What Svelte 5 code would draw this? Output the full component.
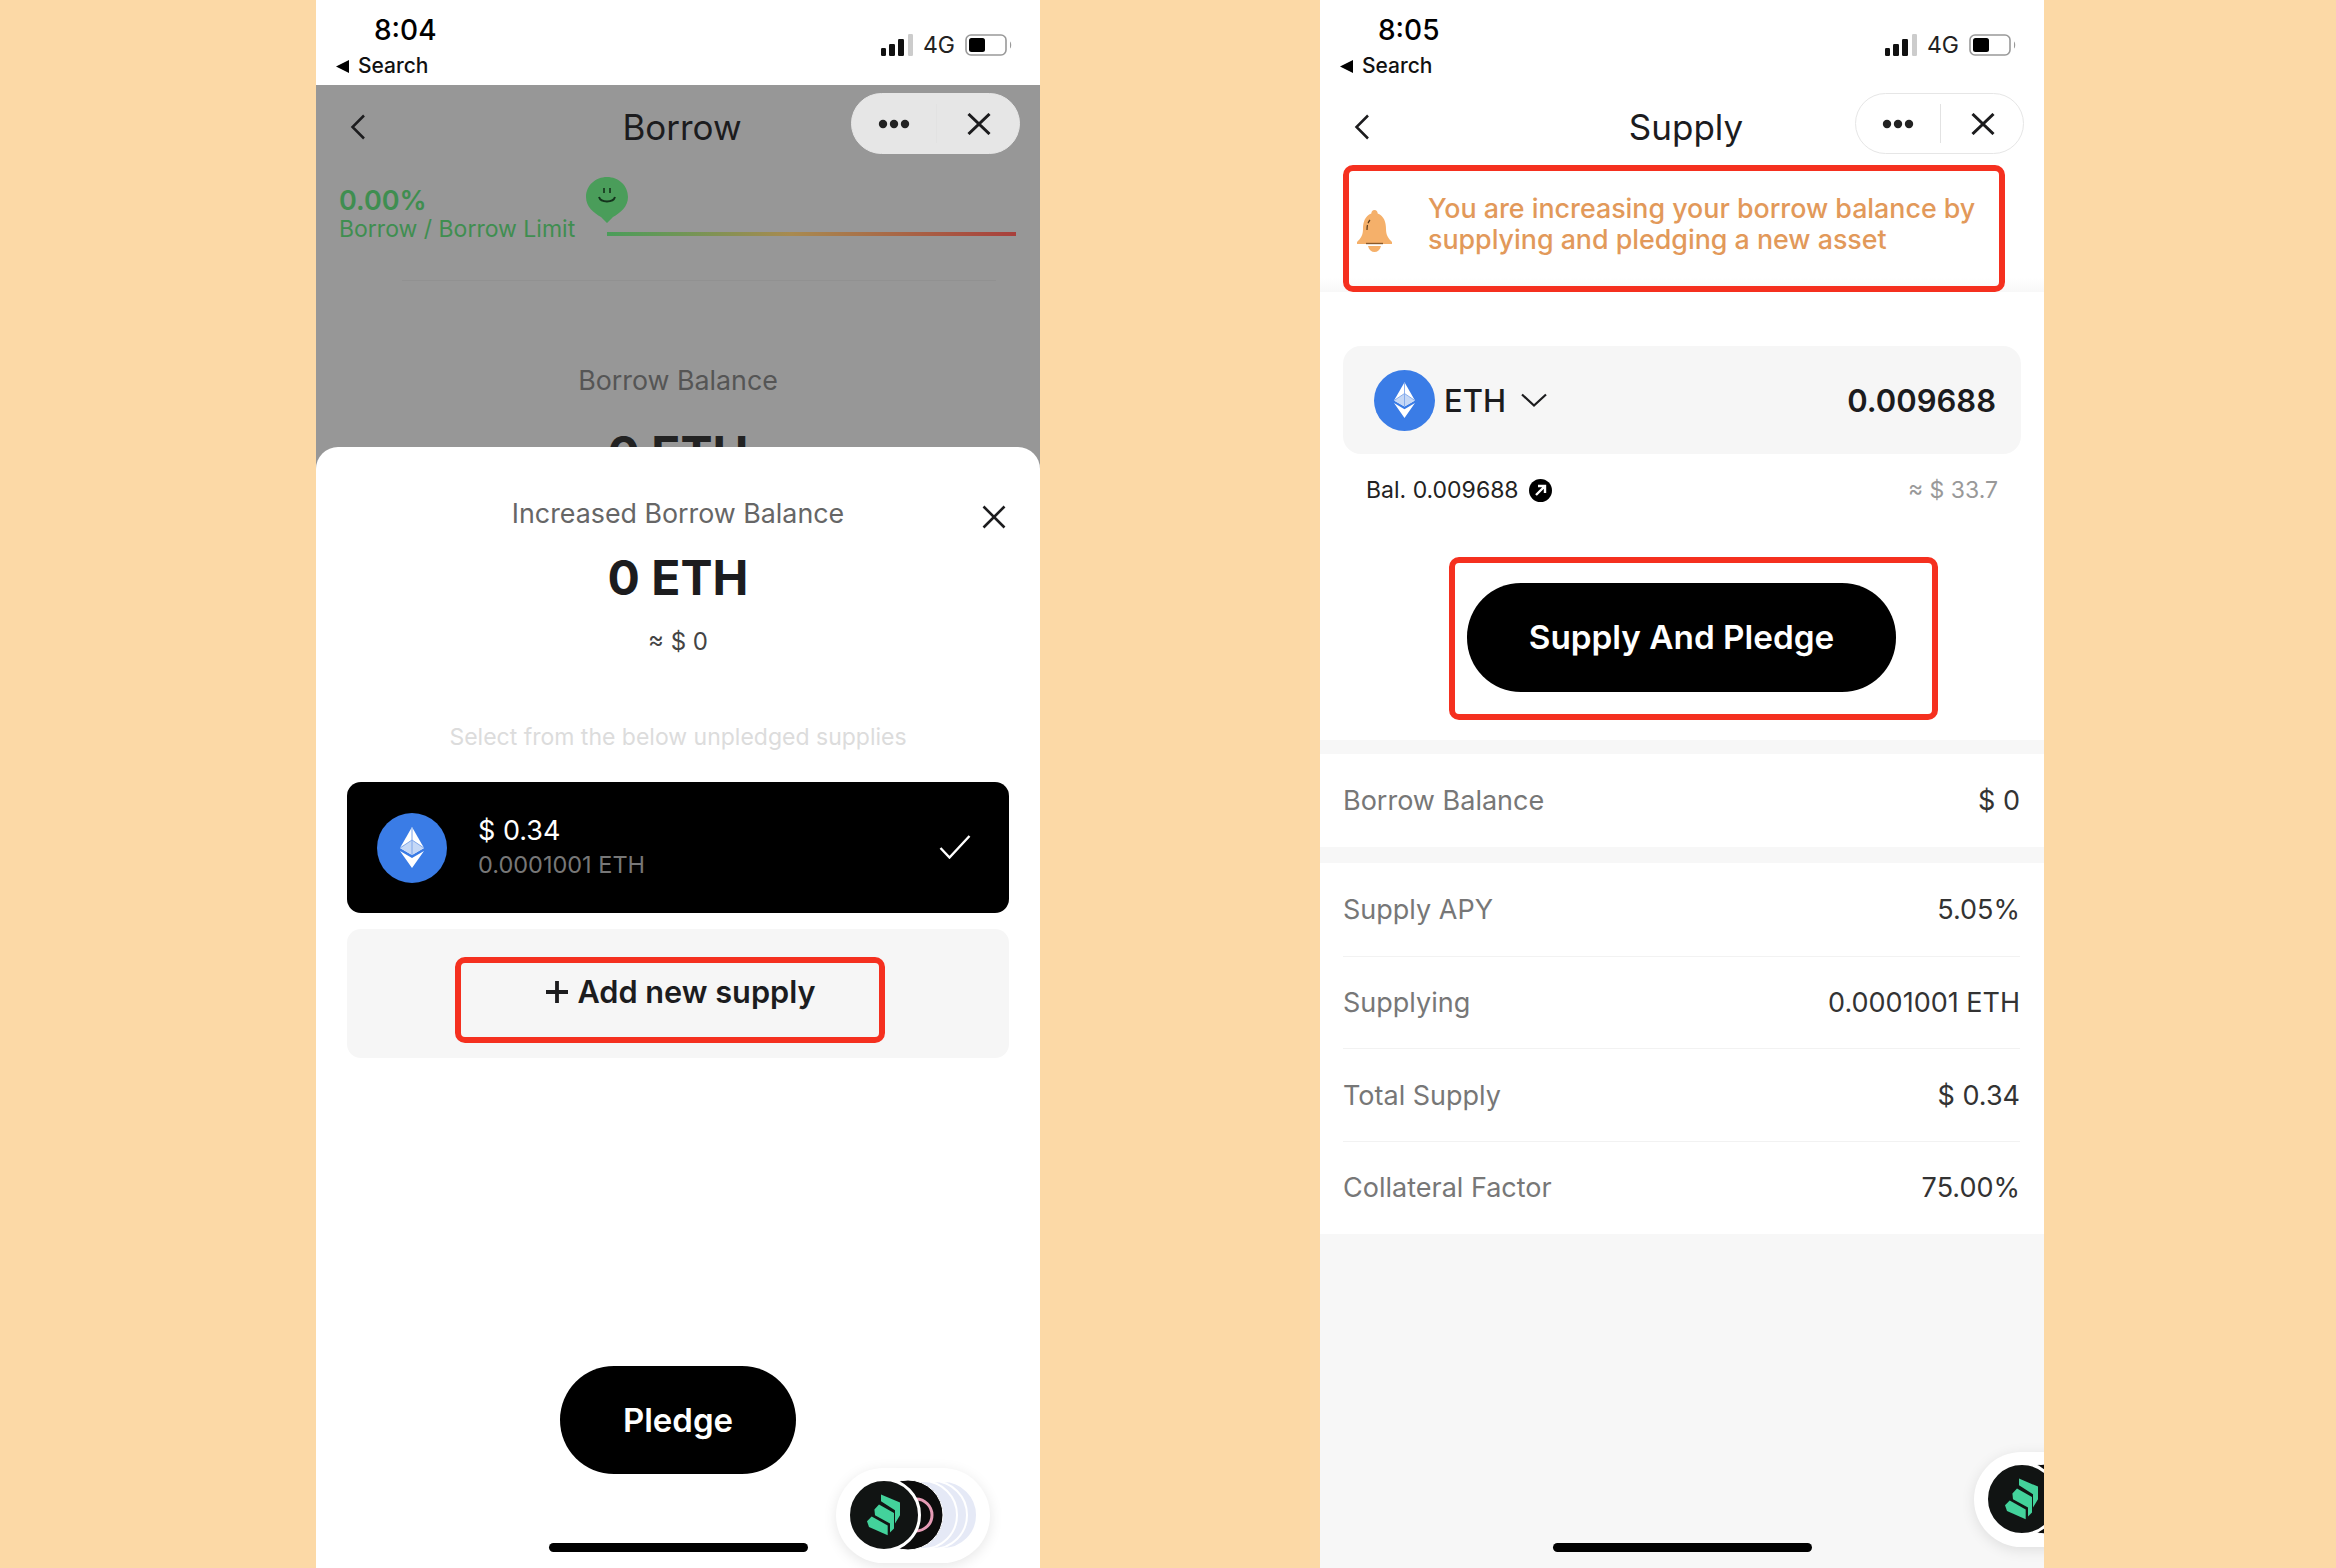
<!-- Two phone screens side by side: the pledge sheet on Borrow, and the Supply form. -->
<script lang="ts">
  const stats = [
    { label: "Supply APY", value: "5.05%" },
    { label: "Supplying", value: "0.0001001 ETH" },
    { label: "Total Supply", value: "$ 0.34" },
    { label: "Collateral Factor", value: "75.00%" },
  ];
</script>

{#snippet statusBar(time: string)}
  <div class="status">
    <div class="status-left">
      <div class="time">{time}</div>
      <div class="back-app">
        <svg width="13" height="13" viewBox="0 0 13 13"><polygon points="13,0 13,13 0,6.5" fill="#000" /></svg>
        <span>Search</span>
      </div>
    </div>
    <div class="status-right">
      <svg width="32" height="22" viewBox="0 0 32 22">
        <rect x="0" y="14" width="5" height="8" rx="1.2" fill="#111" />
        <rect x="8" y="10" width="6" height="12" rx="1.2" fill="#111" />
        <rect x="17" y="5" width="6" height="17" rx="1.2" fill="#111" />
        <rect x="27" y="0" width="5" height="22" rx="1.2" fill="#ccc" />
      </svg>
      <span class="net">4G</span>
      <svg width="47" height="22" viewBox="0 0 47 22">
        <rect x="1" y="1" width="40" height="20" rx="5" fill="#fff" stroke="#999" stroke-width="1.6" />
        <rect x="4" y="4" width="16" height="14" rx="2.5" fill="#000" />
        <path d="M45 7.5c1.600 1 1.600 6 0 7z" fill="#999" />
      </svg>
    </div>
  </div>
{/snippet}

{#snippet navBar(title: string)}
  <div class="nav">
    <svg class="chevron" width="16" height="26" viewBox="0 0 16 26">
      <path d="M14 1.500 2.500 13 14 24.500" fill="none" stroke="#1c1c1e" stroke-width="2.500" />
    </svg>
    <div class="nav-title">{title}</div>
    <div class="capsule">
      <svg width="32" height="10" viewBox="0 0 32 10">
        <circle cx="5" cy="5" r="4.200" fill="#222" />
        <circle cx="16" cy="5" r="4.200" fill="#222" />
        <circle cx="27" cy="5" r="4.200" fill="#222" />
      </svg>
      <i class="capsule-line"></i>
      <svg width="24" height="22" viewBox="0 0 24 22">
        <path d="M1.500 1 22.500 21M22.500 1 1.500 21" fill="none" stroke="#1c1c1e" stroke-width="3" />
      </svg>
    </div>
  </div>
{/snippet}

{#snippet ethIcon(size: number)}
  <svg class="eth" width={size} height={size} viewBox="0 0 70 70">
    <circle cx="35" cy="35" r="35" fill="#3a7ce6" />
    <polygon points="35,14 47,35 35,42 23,35" fill="#fff" />
    <polygon points="35,27 47,35 35,42 23,35" fill="#c5d8f6" />
    <polygon points="23,38 35,45 47,38 35,55" fill="#fff" />
    <path d="M35 14v28M23 35l12-8 12 8" fill="none" stroke="#7ea6ea" stroke-width="1" />
  </svg>
{/snippet}

{#snippet floatBall()}
  <svg width="154" height="95" viewBox="0 0 154 95">
    <circle cx="107" cy="47" r="34" fill="#e5e9f6" stroke="#fff" stroke-width="2" />
    <circle cx="97" cy="47" r="34" fill="#e5e9f6" stroke="#fff" stroke-width="2" />
    <circle cx="87" cy="47" r="34" fill="#e5e9f6" stroke="#fff" stroke-width="2" />
    <circle cx="72" cy="47" r="35" fill="#0c0c0c" stroke="#fff" stroke-width="1" />
    <circle cx="80" cy="47" r="16" fill="none" stroke="#e79cb6" stroke-width="3" />
    <circle cx="48" cy="47" r="35.500" fill="#111413" stroke="#fff" stroke-width="3" />
    <g transform="translate(30.700 26.600)" fill="#43d29b">
      <polygon points="0.300,26.700 5,22 21,31 21,40.700 2.300,32.300" />
      <polygon points="7.700,15 12.300,10 27.300,18.300 27.300,34 23.300,38 23.300,29 8.300,20.700" />
      <polygon points="14.300,0 33.300,8 33.300,20.700 28.300,29 28.300,15.700 14.300,6.700" />
    </g>
  </svg>
{/snippet}

<div class="page">
  <section class="phone">
    {@render statusBar("8:04")}
    <div class="dimmed">
      {@render navBar("Borrow")}
      <div class="limit">
        <div class="limit-text">
          <div class="limit-pct">0.00%</div>
          <div class="limit-label">Borrow / Borrow Limit</div>
        </div>
        <div class="limit-track">
          <svg class="marker" width="42" height="46" viewBox="0 0 42 46">
            <path d="M21 0C32.500 0 42 8.500 42 20c0 10-8 16-15 20l-6 6-6-6C8 36 0 30 0 20 0 8.500 9.500 0 21 0z" fill="#4a9d5a" />
            <path d="M13 20c2 6 14 6 16 0" fill="none" stroke="#14331c" stroke-width="2" />
            <path d="M18 11v5M24 11v5" stroke="#14331c" stroke-width="1.600" />
          </svg>
        </div>
      </div>
      <div class="faint-rule"></div>
      <div class="dim-label">Borrow Balance</div>
      <div class="amount dim-amount">0 ETH</div>
    </div>

    <div class="sheet">
      <svg class="sheet-close" width="24" height="24" viewBox="0 0 24 24">
        <path d="M1.500 1.500 22.500 22.500M22.500 1.500 1.500 22.500" fill="none" stroke="#1c1c1e" stroke-width="2.600" />
      </svg>
      <div class="sheet-title">Increased Borrow Balance</div>
      <div class="amount">0 ETH</div>
      <div class="approx">≈ $ 0</div>
      <div class="hint">Select from the below unpledged supplies</div>
      <div class="supply-card">
        {@render ethIcon(70)}
        <div class="supply-text">
          <div class="supply-usd">$ 0.34</div>
          <div class="supply-eth">0.0001001 ETH</div>
        </div>
        <svg class="check" width="32" height="24" viewBox="0 0 32 24">
          <path d="M1.500 13 10.500 22.500 30.500 1" fill="none" stroke="#fff" stroke-width="2.400" />
        </svg>
      </div>
      <div class="add-card">
        <div class="red-box add-box">
          <svg width="22" height="22" viewBox="0 0 22 22">
            <path d="M11 0v22M0 11h22" stroke="#1c1c1e" stroke-width="3.800" />
          </svg>
          <span>Add new supply</span>
        </div>
      </div>
      <button class="pill pledge">Pledge</button>
    </div>

    <div class="float-ball ball-left">{@render floatBall()}</div>
    <div class="home-bar"></div>
  </section>

  <section class="phone">
    {@render statusBar("8:05")}
    {@render navBar("Supply")}
    <div class="notice-wrap">
      <div class="red-box notice">
        <svg class="bell" width="35" height="42" viewBox="0 0 35 42">
          <path d="M17.500 0c2 0 3 1.500 3.200 3.500C27 6 29 12 29 19c0 6 2 9 6 13v2H0v-2c4-4 6-7 6-13 0-7 2-13 8.300-15.500C14.500 1.500 15.500 0 17.500 0z" fill="#f5b06a" />
          <path d="M11 36h13c-1 4-3.500 6-6.500 6S12 40 11 36z" fill="#f5b06a" />
          <path d="M9 33.500h17" stroke="#8a5a2a" stroke-width="1.400" />
          <path d="M10 20c0-4 .5-7 3-10" fill="none" stroke="#5b3a1a" stroke-width="1.200" stroke-dasharray="5 2" />
        </svg>
        <div class="notice-text">You are increasing your borrow balance by<br />supplying and pledging a new asset</div>
      </div>
    </div>

    <div class="input-row">
      {@render ethIcon(61)}
      <span class="symbol">ETH</span>
      <svg class="caret" width="26" height="14" viewBox="0 0 26 14">
        <path d="M1 1.500 13 12.500 25 1.500" fill="none" stroke="#1c1c1e" stroke-width="2.200" />
      </svg>
      <span class="input-value">0.009688</span>
    </div>

    <div class="bal-row">
      <span class="bal">Bal. 0.009688</span>
      <svg width="23" height="23" viewBox="0 0 23 23">
        <circle cx="11.500" cy="11.500" r="11.500" fill="#000" />
        <path d="M7 16 15.500 7.500M9 7h7v7" fill="none" stroke="#fff" stroke-width="2.400" />
      </svg>
      <span class="bal-usd">≈ $ 33.7</span>
    </div>

    <div class="red-box submit-box">
      <button class="pill submit">Supply And Pledge</button>
    </div>

    <div class="stats">
      <div class="stat-group">
        <div class="stat-row"><span>Borrow Balance</span><b>$ 0</b></div>
      </div>
      <div class="stat-group">
        {#each stats as s}
          <div class="stat-row ruled"><span>{s.label}</span><b>{s.value}</b></div>
        {/each}
      </div>
    </div>

    <div class="float-ball ball-right">{@render floatBall()}</div>
    <div class="home-bar"></div>
  </section>
</div>

<style>
  :global(body) {
    margin: 0;
    background: #fcd9a6;
  }
  .page {
    display: flex;
    gap: 280px;
    width: 2336px;
    height: 1568px;
    padding-left: 316px;
    box-sizing: border-box;
    background: #fcd9a6;
    font-family: Inter, "Liberation Sans", sans-serif;
    color: #1c1c1e;
  }
  .phone {
    position: relative;
    display: flex;
    flex-direction: column;
    width: 724px;
    height: 1568px;
    overflow: hidden;
    background: #fff;
  }

  .status {
    display: flex;
    justify-content: space-between;
    flex: none;
    height: 85px;
    padding: 12px 28px 0 20px;
    box-sizing: border-box;
    background: #fff;
  }
  .time {
    margin-left: 38px;
    font-size: 28px;
    font-weight: 500;
    line-height: 36px;
    color: #000;
  }
  .back-app {
    display: flex;
    align-items: center;
    gap: 9px;
    margin-top: 4px;
    font-size: 21px;
    line-height: 28px;
    font-weight: 500;
    color: #111;
  }
  .status-right {
    display: flex;
    align-items: center;
    gap: 10px;
    height: 22px;
    margin-top: 22px;
  }
  .net {
    font-size: 23px;
    color: #222;
  }

  .nav {
    display: grid;
    grid-template-columns: 1fr auto 1fr;
    align-items: center;
    flex: none;
    height: 84px;
    padding: 0 20px 0 34px;
    box-sizing: border-box;
  }
  .chevron {
    justify-self: start;
  }
  .nav-title {
    font-size: 35px;
    margin-left: -6px;
  }
  .capsule {
    justify-self: end;
    align-self: start;
    display: flex;
    align-items: center;
    width: 169px;
    height: 61px;
    margin-top: 8px;
    padding-left: 26px;
    box-sizing: border-box;
    border: 1.500px solid #e6e6e6;
    border-radius: 31px;
    background: #fff;
  }
  .capsule-line {
    width: 1px;
    height: 39px;
    margin: 0 30px 0 26px;
    background: #e2e2e2;
  }
  .dimmed .capsule {
    background: #e6e6e6;
    border-color: #e6e6e6;
  }

  .dimmed {
    flex: 1;
    background: #979797;
  }
  .limit {
    display: flex;
    align-items: flex-end;
    gap: 32px;
    padding: 17px 24px 0 23px;
  }
  .limit-pct {
    font-size: 27px;
    font-weight: 600;
    line-height: 30px;
    color: #3f8e50;
  }
  .limit-label {
    font-size: 23px;
    line-height: 27px;
    color: #3f8e50;
    white-space: nowrap;
  }
  .limit-track {
    position: relative;
    flex: 1;
    height: 4px;
    margin-bottom: 7px;
    background: linear-gradient(90deg, #4a9d5a, #a88a50 45%, #a8403c);
  }
  .marker {
    position: absolute;
    left: -21px;
    top: -55px;
  }
  .faint-rule {
    height: 1px;
    margin: 37px 44px 0 86px;
    background: #919191;
  }
  .dim-label {
    margin-top: 83px;
    text-align: center;
    font-size: 26.800px;
    line-height: 32px;
    color: #555;
  }
  .amount {
    text-align: center;
    font-size: 48px;
    font-weight: 700;
    line-height: 58px;
    color: #1c1c1e;
  }
  .dim-amount {
    margin-top: 29px;
    color: #222;
  }

  .sheet {
    position: absolute;
    left: 0;
    right: 0;
    top: 447px;
    bottom: 0;
    display: flex;
    flex-direction: column;
    align-items: center;
    padding: 49px 31px 0;
    box-sizing: border-box;
    background: #fff;
    border-radius: 22px 22px 0 0;
  }
  .sheet-close {
    position: absolute;
    right: 34px;
    top: 58px;
  }
  .sheet-title {
    font-size: 26.800px;
    line-height: 34px;
    color: #666;
  }
  .sheet .amount {
    margin-top: 19px;
  }
  .approx {
    margin-top: 20px;
    font-size: 24px;
    line-height: 30px;
    color: #444;
  }
  .hint {
    margin-top: 65px;
    font-size: 23px;
    line-height: 30px;
    color: #dcdcdc;
  }
  .supply-card {
    display: flex;
    align-items: center;
    align-self: stretch;
    height: 131px;
    margin-top: 30px;
    padding: 0 38px 0 30px;
    box-sizing: border-box;
    border-radius: 14px;
    background: #000;
  }
  .supply-text {
    margin-left: 31px;
    margin-top: -2px;
  }
  .supply-usd {
    font-size: 27px;
    line-height: 34px;
    color: #fff;
  }
  .supply-eth {
    margin-top: 3px;
    font-size: 23.500px;
    line-height: 28px;
    color: #777;
  }
  .check {
    margin-left: auto;
    margin-top: -2px;
  }
  .add-card {
    display: flex;
    align-items: center;
    justify-content: center;
    align-self: stretch;
    height: 129px;
    margin-top: 16px;
    border-radius: 14px;
    background: #f6f6f6;
  }
  .red-box {
    box-sizing: border-box;
    border: 6px solid #f5301f;
    border-radius: 10px;
  }
  .add-box {
    display: flex;
    align-items: center;
    justify-content: center;
    gap: 9px;
    width: 430px;
    height: 86px;
    margin: 12px 16px 0 0;
    padding: 0 0 16px 22px;
    font-size: 30.700px;
    font-weight: 600;
  }
  .pill {
    border: 0;
    background: #000;
    color: #fff;
    font-family: inherit;
    font-weight: 600;
    border-radius: 54px;
    height: 108px;
  }
  .pledge {
    width: 236px;
    margin-top: 308px;
    font-size: 33px;
  }

  .float-ball {
    position: absolute;
    width: 154px;
    height: 95px;
    border-radius: 48px;
    background: #fff;
    box-shadow: 0 3px 14px rgba(0, 0, 0, 0.1);
  }
  .float-ball svg {
    display: block;
  }
  .ball-left {
    left: 520px;
    top: 1468px;
  }
  .ball-right {
    left: 654px;
    top: 1452px;
  }
  .home-bar {
    position: absolute;
    left: 233px;
    top: 1543px;
    width: 259px;
    height: 9px;
    border-radius: 5px;
    background: #000;
  }

  .notice-wrap {
    flex: none;
    height: 127px;
    padding: 0 39px 0 23px;
    margin-top: -4px;
    background: linear-gradient(#fff 89%, #f8f8f8);
  }
  .notice {
    display: flex;
    align-items: center;
    gap: 36px;
    height: 127px;
    padding: 0 8px 10px 8px;
  }
  .bell {
    flex: none;
    margin-top: 14px;
  }
  .notice-text {
    font-size: 26.800px;
    font-weight: 500;
    line-height: 31px;
    color: #e2995a;
    white-space: nowrap;
  }
  .input-row {
    display: flex;
    align-items: center;
    flex: none;
    height: 108px;
    margin: 54px 23px 0 23px;
    padding: 0 25px 0 31px;
    box-sizing: border-box;
    border-radius: 18px;
    background: #f6f6f6;
  }
  .symbol {
    margin-left: 9px;
    font-size: 31px;
    font-weight: 500;
  }
  .caret {
    margin-left: 15px;
  }
  .input-value {
    margin-left: auto;
    font-size: 31px;
    font-weight: 600;
  }
  .bal-row {
    display: flex;
    align-items: center;
    gap: 10px;
    flex: none;
    height: 32px;
    margin: 20px 46px 0 46px;
    font-size: 23px;
    color: #222;
  }
  .bal-usd {
    margin-left: auto;
    color: #999;
  }
  .submit-box {
    flex: none;
    width: 489px;
    height: 163px;
    margin: 51px 0 0 129px;
    padding: 20px 0 0 12px;
  }
  .submit {
    width: 429px;
    height: 109px;
    font-size: 33.300px;
    padding-bottom: 2px;
  }
  .stats {
    display: flex;
    flex-direction: column;
    flex: 1;
    gap: 16px;
    margin-top: 20px;
    padding-top: 14px;
    background: #f7f7f7;
  }
  .stat-group {
    background: #fff;
  }
  .stat-row {
    display: flex;
    justify-content: space-between;
    align-items: center;
    box-sizing: border-box;
    height: 92.750px;
    margin: 0 24px 0 23px;
    font-size: 27px;
    color: #777;
  }
  .stat-row b {
    font-weight: 400;
    color: #333;
  }
  .ruled + .ruled {
    border-top: 1.500px solid #f2f2f2;
  }
</style>
